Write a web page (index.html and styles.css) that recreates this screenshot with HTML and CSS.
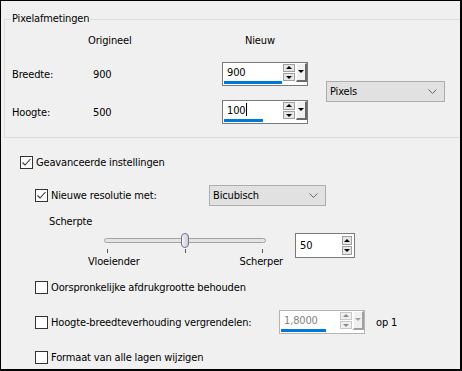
FILE: index.html
```html
<!DOCTYPE html>
<html lang="nl">
<head>
    <meta charset="UTF-8">
    <title>Afbeeldingsgrootte wijzigen</title>
    <link rel="stylesheet" href="styles.css">
</head>
<body>
    <div class="dialog">

        <!-- Pixel dimensions group -->
        <div class="group">
            <span class="group-title">Pixelafmetingen</span>
            <div class="dims">
                <span></span>
                <span class="col-head">Origineel</span>
                <span class="col-head new">Nieuw</span>
                <span></span>

                <span class="dim-label">Breedte:</span>
                <span class="dim-value">900</span>
                <div class="spin wide">
                    <div class="spin-field">
                        <span class="spin-text">900</span>
                        <span class="spin-bar bar-full"></span>
                    </div>
                    <div class="spin-arrows">
                        <span class="arrow up"></span>
                        <span class="arrow down"></span>
                    </div>
                    <span class="spin-drop"></span>
                </div>
                <div class="select unit">
                    <span>Pixels</span>
                    <svg class="chevron" width="9" height="5" viewBox="0 0 9 5"><polyline points="0.5,0.5 4.5,4.5 8.5,0.5" fill="none" stroke="#666" stroke-width="1"/></svg>
                </div>

                <span class="dim-label">Hoogte:</span>
                <span class="dim-value">500</span>
                <div class="spin wide">
                    <div class="spin-field">
                        <span class="spin-text">100<span class="caret"></span></span>
                        <span class="spin-bar bar-part"></span>
                    </div>
                    <div class="spin-arrows">
                        <span class="arrow up"></span>
                        <span class="arrow down"></span>
                    </div>
                    <span class="spin-drop"></span>
                </div>
            </div>
        </div>

        <!-- Advanced settings -->
        <div class="row adv">
            <span class="cb"><svg width="11" height="11" viewBox="0 0 11 11"><polyline points="1.5,5.5 4,8 9.5,2" fill="none" stroke="#333" stroke-width="1.1"/></svg></span>
            <span>Geavanceerde instellingen</span>
        </div>

        <div class="row res indent">
            <span class="check-label res-label">
                <span class="cb"><svg width="11" height="11" viewBox="0 0 11 11"><polyline points="1.5,5.5 4,8 9.5,2" fill="none" stroke="#333" stroke-width="1.1"/></svg></span>
                <span>Nieuwe resolutie met:</span>
            </span>
            <div class="select method">
                <span>Bicubisch</span>
                <svg class="chevron" width="9" height="5" viewBox="0 0 9 5"><polyline points="0.5,0.5 4.5,4.5 8.5,0.5" fill="none" stroke="#666" stroke-width="1"/></svg>
            </div>
        </div>

        <div class="sharp-label">Scherpte</div>

        <div class="slider-row">
            <div class="slider">
                <div class="track-wrap">
                    <div class="track">
                        <span class="thumb"></span>
                    </div>
                </div>
                <div class="ticks">
                    <span></span><span></span><span></span>
                </div>
                <div class="slider-labels">
                    <span>Vloeiender</span>
                    <span>Scherper</span>
                </div>
            </div>
            <div class="spin small">
                <div class="spin-field">
                    <span class="spin-text">50</span>
                </div>
                <div class="spin-arrows">
                    <span class="arrow up"></span>
                    <span class="arrow down"></span>
                </div>
            </div>
        </div>

        <div class="row keep indent">
            <span class="cb"></span>
            <span>Oorspronkelijke afdrukgrootte behouden</span>
        </div>

        <div class="row lock indent">
            <span class="check-label lock-label">
                <span class="cb"></span>
                <span>Hoogte-breedteverhouding vergrendelen:</span>
            </span>
            <div class="spin wide disabled">
                <div class="spin-field">
                    <span class="spin-text">1,8000</span>
                    <span class="spin-bar bar-ratio"></span>
                </div>
                <div class="spin-arrows">
                    <span class="arrow up"></span>
                    <span class="arrow down"></span>
                </div>
                <span class="spin-drop"></span>
            </div>
            <span class="ratio-suffix">op 1</span>
        </div>

        <div class="row all indent">
            <span class="cb"></span>
            <span>Formaat van alle lagen wijzigen</span>
        </div>

    </div>
</body>
</html>
```

FILE: styles.css
```css
/* Page reset */
html, body {
    margin: 0;
    padding: 0;
    background: #f0f0f0;
}

/* Dialog frame */
.dialog {
    width: 462px;
    height: 371px;
    box-sizing: border-box;
    border: 1px solid #000;
    border-right-width: 2px;
    border-bottom-width: 2px;
    background: #f0f0f0;
    overflow: hidden;
    font-family: "DejaVu Sans Condensed", "DejaVu Sans", sans-serif;
    font-size: 11px;
    letter-spacing: -0.15px;
    color: #000;
}

/* Group box "Pixelafmetingen" */
.group {
    position: relative;
    margin: 18px 0 0 3px;
    height: 119px;
    box-sizing: border-box;
    border: 1px solid #dcdcdc;
    border-right: none;
    padding: 13px 0 0 7px;
}

.group-title {
    position: absolute;
    top: -8px;
    left: 6px;
    padding: 0 1px;
    background: #f0f0f0;
    line-height: 14px;
}

.dims {
    display: grid;
    grid-template-columns: 76px 134px 86px auto;
    grid-template-rows: 15px 24px 24px;
    row-gap: 14px;
    align-items: center;
}

.col-head.new {
    padding-left: 23px;
}

.dim-value {
    padding-left: 5px;
}

/* Spin boxes */
.spin {
    display: flex;
    box-sizing: border-box;
    height: 24px;
    border: 1px solid #7a7a7a;
    background: #fff;
}

.spin.wide {
    width: 86px;
}

.spin-field {
    flex: 1;
    display: flex;
    flex-direction: column;
}

.spin-text {
    height: 16px;
    line-height: 16px;
    padding: 2px 0 0 4px;
}

.spin-bar {
    height: 3px;
    margin-left: 1px;
    background: #0078d7;
}

.bar-full { width: 58px; }
.bar-part { width: 39px; }
.bar-ratio { width: 45px; }

.caret {
    display: inline-block;
    width: 1px;
    height: 13px;
    margin-left: 1px;
    background: #000;
    vertical-align: -2px;
}

.spin-arrows {
    display: flex;
    flex-direction: column;
    gap: 1px;
    width: 12px;
    margin-top: 1px;
}

.arrow {
    position: relative;
    height: 8px;
    box-sizing: border-box;
    border: 1px solid #a0a0a0;
    background: #e6e6e6;
}

.arrow::after {
    content: "";
    position: absolute;
    left: 2px;
    border-left: 3px solid transparent;
    border-right: 3px solid transparent;
}

.arrow.up::after {
    top: 1px;
    border-bottom: 3px solid #000;
}

.arrow.down::after {
    top: 2px;
    border-top: 3px solid #000;
}

.spin-drop {
    position: relative;
    width: 11px;
    height: 19px;
    margin-left: 1px;
    box-sizing: border-box;
    border-top: 1px solid #fff;
    border-left: 1px solid #fff;
    border-right: 2px solid #696969;
    border-bottom: 2px solid #696969;
    background: #f0f0f0;
}

.spin-drop::after {
    content: "";
    position: absolute;
    top: 6px;
    left: 1px;
    border-left: 3px solid transparent;
    border-right: 3px solid transparent;
    border-top: 3px solid #000;
}

.spin.small {
    width: 60px;
    height: 25px;
    margin: 4px 0 0 12px;
}

.spin.small .spin-text {
    padding: 4px 0 0 4px;
}

.spin.small .spin-arrows {
    width: 10px;
    margin: 2px 2px 0 0;
}

.spin.small .arrow {
    height: 9px;
}

.spin.small .arrow::after {
    left: 1px;
}

.spin.small .arrow.up::after {
    top: 2px;
}

.spin.disabled {
    border-color: #b4b4b4;
}

.spin.disabled .spin-text {
    color: #838383;
}

.spin.disabled .arrow {
    border-color: #c8c8c8;
    background: #f0f0f0;
}

.spin.disabled .arrow.up::after { border-bottom-color: #8a8a8a; }
.spin.disabled .arrow.down::after { border-top-color: #8a8a8a; }

.spin.disabled .spin-drop {
    border-right-color: #a0a0a0;
    border-bottom-color: #a0a0a0;
}

.spin.disabled .spin-drop::after {
    border-top-color: #a0a0a0;
}

/* Drop-down lists */
.select {
    display: flex;
    align-items: center;
    justify-content: space-between;
    box-sizing: border-box;
    height: 21px;
    padding: 0 7px 0 3px;
    border: 1px solid #adadad;
    background: #e1e1e1;
}

.select.unit {
    width: 119px;
    margin-left: 18px;
    grid-row: 2 / 4;
    grid-column: 4;
    align-self: start;
    margin-top: 19px;
}

.select.method {
    width: 117px;
}

/* Check box rows */
.row {
    display: flex;
    align-items: center;
    height: 24px;
    padding-left: 19px;
}

.row.indent {
    padding-left: 34px;
}

.check-label {
    display: flex;
    align-items: center;
}

.res-label { width: 174px; }
.lock-label { width: 244px; }

.cb {
    display: inline-flex;
    align-items: center;
    justify-content: center;
    width: 13px;
    height: 13px;
    box-sizing: border-box;
    margin-right: 3px;
    border: 1px solid #333;
    background: #fff;
}

.row.adv  { margin-top: 12px; }
.row.res  { margin-top: 9px; }
.row.keep { margin-top: 5px; }
.row.lock { margin-top: 11px; }
.row.all  { margin-top: 11px; }

.ratio-suffix {
    margin-left: 11px;
}

/* Sharpness slider */
.sharp-label {
    height: 14px;
    line-height: 14px;
    margin-top: 8px;
    padding-left: 48px;
}

.slider-row {
    display: flex;
    height: 41px;
    padding-left: 87px;
}

.slider {
    width: 195px;
}

.track-wrap {
    height: 20px;
    padding-top: 9px;
    box-sizing: border-box;
}

.track {
    position: relative;
    width: 162px;
    height: 5px;
    margin-left: 16px;
    box-sizing: border-box;
    border: 1px solid #a2a2a2;
    border-radius: 3px;
    background: #e4e4e4;
}

.thumb {
    position: absolute;
    top: -6px;
    left: 76px;
    width: 8px;
    height: 15px;
    box-sizing: border-box;
    border: 1px solid #6f7585;
    border-radius: 4px;
    background: linear-gradient(to right, #f4f4f8, #c9cbda);
}

.ticks {
    display: flex;
    justify-content: space-between;
    width: 156px;
    height: 4px;
    margin-left: 19px;
}

.ticks span {
    width: 1px;
    background: #5a5a5a;
}

.slider-labels {
    display: flex;
    justify-content: space-between;
    margin-top: 2px;
    line-height: 14px;
}
```
